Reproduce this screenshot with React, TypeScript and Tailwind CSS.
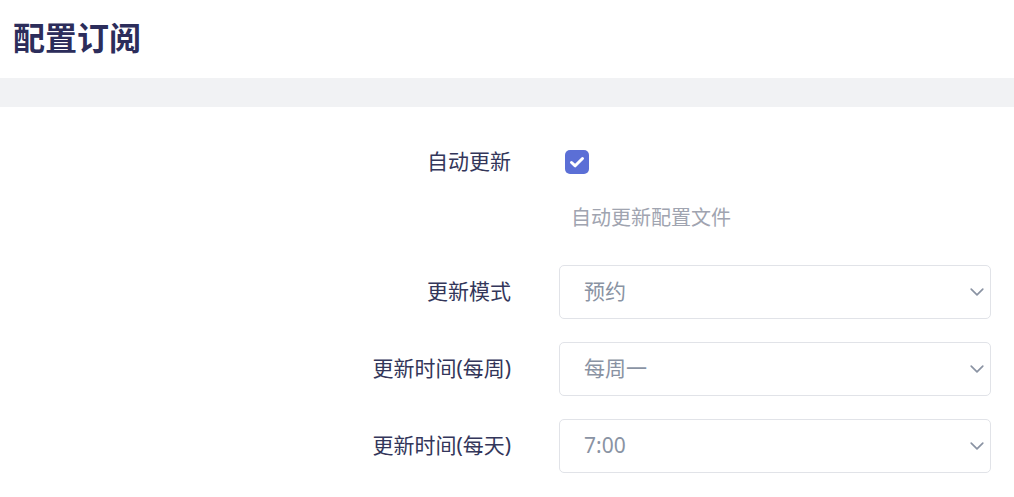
import React from "react";

const font = { fontFamily: '"Noto Sans", "Noto Sans CJK SC", sans-serif' };

function Chevron() {
  return (
    <svg width="16" height="14" viewBox="0 0 16 14" fill="none" className="absolute right-[5px] top-1/2 -translate-y-1/2">
      <path d="M2.2 4.2 L8 9.8 L13.8 4.2" stroke="#8a93a3" strokeWidth="1.7" strokeLinecap="round" strokeLinejoin="round" />
    </svg>
  );
}

function SelectBox({ value }: { value: string }) {
  return (
    <div className="relative h-[54px] w-[432px] rounded-[5px] border border-[#e1e3e8] bg-white flex items-center pl-[24px] text-[21px] text-[#8a93a3]">
      {value}
      <Chevron />
    </div>
  );
}

export default function App() {
  return (
    <div className="w-[1014px] h-[497px] bg-white overflow-hidden" style={font}>
      <div className="h-[78px] flex items-center pl-[13px]">
        <h1 className="text-[32px] font-bold text-[#2c2d5b] leading-none pb-[3px]">配置订阅</h1>
      </div>
      <div className="h-[29px] bg-[#f1f2f4]" />
      <div className="grid grid-cols-[511px_432px] gap-x-[48px] pt-[40px] items-center text-[21px] text-[#33365a]">
        <div className="text-right h-[30px] leading-[28px]">自动更新</div>
        <div className="h-[30px] flex items-center pl-[6px]">
          <div className="w-[24px] h-[24px] rounded-[5px] bg-[#5b6fd6] flex items-center justify-center">
            <svg width="18" height="18" viewBox="0 0 18 18" fill="none">
              <path d="M3.5 9.5 L7.2 12.8 L14.5 5.5" stroke="white" strokeWidth="3" strokeLinecap="round" strokeLinejoin="round" />
            </svg>
          </div>
        </div>
        <div />
        <div className="pl-[12px] pt-[27px] leading-[28px] text-[20px] text-[#a0a4b0]">自动更新配置文件</div>
        <div className="text-right mt-[33px]">更新模式</div>
        <div className="mt-[33px]"><SelectBox value="预约" /></div>
        <div className="text-right mt-[23px]">更新时间(每周)</div>
        <div className="mt-[23px]"><SelectBox value="每周一" /></div>
        <div className="text-right mt-[23px]">更新时间(每天)</div>
        <div className="mt-[23px]"><SelectBox value="7:00" /></div>
      </div>
    </div>
  );
}
